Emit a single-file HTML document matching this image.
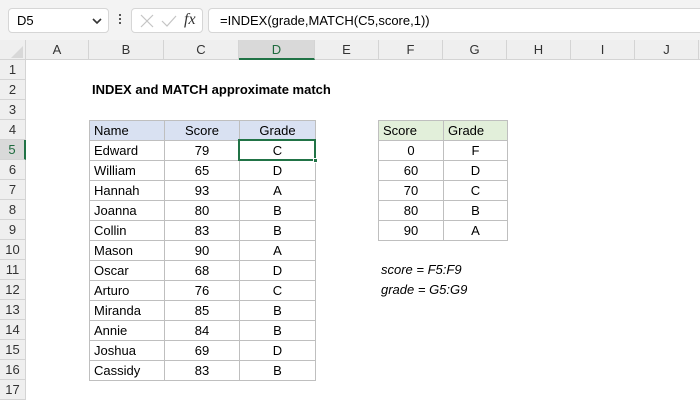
<!DOCTYPE html>
<html><head><meta charset="utf-8"><style>
*{margin:0;padding:0;box-sizing:border-box}
body{width:700px;height:400px;overflow:hidden;background:#fff;font-family:"Liberation Sans",sans-serif;font-size:13px;color:#000;position:relative}
.a{position:absolute}
.top{left:0;top:0;width:700px;height:40px;background:#f3f3f3}
.box{background:#fff;border:1px solid #d6d6d6;border-radius:4px}
.ch{top:40px;height:20px;background:#efefef;border-right:1px solid #d4d4d4;border-bottom:1px solid #d4d4d4;text-align:center;line-height:20px;color:#333;font-size:13px}
.rh{left:0;width:26px;height:20px;background:#efefef;border-bottom:1px solid #d4d4d4;border-right:1px solid #d4d4d4;text-align:center;line-height:20px;color:#333;font-size:13px}
table{position:absolute;border-collapse:collapse}
td{border:1px solid #bfbfbf;height:20px;padding:0 4px;line-height:18px;font-size:13px}
.c{text-align:center}
</style></head><body>
<div class="a top"></div>
<div class="a box" style="left:8px;top:8px;width:101px;height:25px;"><span class="a" style="left:8px;top:4px;font-size:13px">D5</span>
<svg class="a" style="left:83px;top:8px" width="10" height="8"><path d="M1 2 L5 6 L9 2" stroke="#333" stroke-width="1.6" fill="none"/></svg></div>
<div class="a" style="left:119px;top:14px;width:2px;height:2px;background:#555;box-shadow:0 4px 0 #555,0 8px 0 #555"></div>
<div class="a box" style="left:131px;top:8px;width:72px;height:25px;">
<svg class="a" style="left:8px;top:5px" width="14" height="14"><path d="M1 1L13 13M13 1L1 13" stroke="#c4c4c4" stroke-width="1.2"/></svg>
<svg class="a" style="left:29px;top:5px" width="16" height="14"><path d="M1 7L6 12L15 2" stroke="#c4c4c4" stroke-width="1.2" fill="none"/></svg>
<span class="a" style="left:52px;top:2px;font-family:'Liberation Serif',serif;font-style:italic;font-size:16px;color:#333">fx</span></div>
<div class="a box" style="left:208px;top:8px;width:500px;height:25px;"><span class="a" style="left:11px;top:4px;font-size:13px">=INDEX(grade,MATCH(C5,score,1))</span></div>

<div class="a" style="left:0;top:40px;width:26px;height:20px;background:#efefef;border-right:1px solid #d4d4d4;border-bottom:1px solid #d4d4d4"></div>
<svg class="a" style="left:11px;top:46px" width="13" height="13"><path d="M12 0L12 12L0 12Z" fill="#d8d8d8"/></svg>
<div class="a ch" style="left:26px;width:63px">A</div>
<div class="a ch" style="left:89px;width:75px">B</div>
<div class="a ch" style="left:164px;width:75px">C</div>
<div class="a ch" style="left:239px;width:76px;background:#d9d9d9;border-bottom:2px solid #217346;color:#1f6b3e">D</div>
<div class="a ch" style="left:315px;width:64px">E</div>
<div class="a ch" style="left:379px;width:64px">F</div>
<div class="a ch" style="left:443px;width:64px">G</div>
<div class="a ch" style="left:507px;width:64px">H</div>
<div class="a ch" style="left:571px;width:64px">I</div>
<div class="a ch" style="left:635px;width:64px">J</div>
<div class="a ch" style="left:699px;width:10px"></div>

<div class="a rh" style="top:60px">1</div><div class="a rh" style="top:80px">2</div><div class="a rh" style="top:100px">3</div><div class="a rh" style="top:120px">4</div>
<div class="a rh" style="top:140px;background:#d9d9d9;border-right:2px solid #217346;color:#1f6b3e">5</div>
<div class="a rh" style="top:160px">6</div><div class="a rh" style="top:180px">7</div><div class="a rh" style="top:200px">8</div><div class="a rh" style="top:220px">9</div><div class="a rh" style="top:240px">10</div><div class="a rh" style="top:260px">11</div><div class="a rh" style="top:280px">12</div><div class="a rh" style="top:300px">13</div><div class="a rh" style="top:320px">14</div><div class="a rh" style="top:340px">15</div><div class="a rh" style="top:360px">16</div><div class="a rh" style="top:380px">17</div>

<div class="a" style="left:92px;top:82px;font-weight:bold;font-size:13px">INDEX and MATCH approximate match</div>

<table style="left:89px;top:120px">
<tr style="background:#d9e1f2"><td style="width:75px">Name</td><td class="c" style="width:75px">Score</td><td class="c" style="width:76px">Grade</td></tr>
<tr><td>Edward</td><td class="c">79</td><td class="c">C</td></tr>
<tr><td>William</td><td class="c">65</td><td class="c">D</td></tr>
<tr><td>Hannah</td><td class="c">93</td><td class="c">A</td></tr>
<tr><td>Joanna</td><td class="c">80</td><td class="c">B</td></tr>
<tr><td>Collin</td><td class="c">83</td><td class="c">B</td></tr>
<tr><td>Mason</td><td class="c">90</td><td class="c">A</td></tr>
<tr><td>Oscar</td><td class="c">68</td><td class="c">D</td></tr>
<tr><td>Arturo</td><td class="c">76</td><td class="c">C</td></tr>
<tr><td>Miranda</td><td class="c">85</td><td class="c">B</td></tr>
<tr><td>Annie</td><td class="c">84</td><td class="c">B</td></tr>
<tr><td>Joshua</td><td class="c">69</td><td class="c">D</td></tr>
<tr><td>Cassidy</td><td class="c">83</td><td class="c">B</td></tr>
</table>
<div class="a" style="left:238px;top:139px;width:78px;height:22px;border:2px solid #217346"></div>
<div class="a" style="left:313px;top:158px;width:5px;height:5px;background:#217346;border:1px solid #fff"></div>

<table style="left:378px;top:120px">
<tr style="background:#e2efda"><td style="width:65px">Score</td><td style="width:64px">Grade</td></tr>
<tr><td class="c">0</td><td class="c">F</td></tr>
<tr><td class="c">60</td><td class="c">D</td></tr>
<tr><td class="c">70</td><td class="c">C</td></tr>
<tr><td class="c">80</td><td class="c">B</td></tr>
<tr><td class="c">90</td><td class="c">A</td></tr>
</table>
<div class="a" style="left:381px;top:262px;font-style:italic">score = F5:F9</div>
<div class="a" style="left:381px;top:282px;font-style:italic">grade = G5:G9</div>
</body></html>
